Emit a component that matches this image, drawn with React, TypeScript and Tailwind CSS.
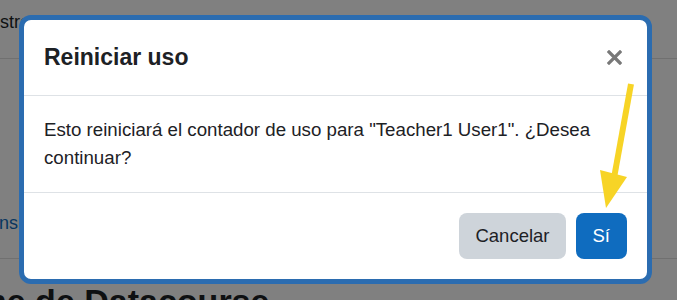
export default function App() {
  return (
    <div className="relative h-[300px] w-[677px] overflow-hidden bg-[#808080] font-['Liberation_Sans',Arial,sans-serif]">
      {/* page behind the backdrop */}
      <div className="flex h-[59px] items-start gap-[23px] border-b border-[#707070] pt-[9px] text-[18px] text-[#0e1012]">
        <span className="-ml-[55px]">Administración del sitio</span>
        <span>Analytics</span>
        <span>Comunidad</span>
      </div>
      <div className="h-[200px] border-b border-[#707070] pt-[151px] text-[18px] text-[#08365f]">
        <span className="-ml-[37px] block">Extensiones</span>
      </div>
      <h2 className="-ml-[99px] mt-[25px] whitespace-nowrap text-[34px] font-bold leading-none text-[#0e1012]">Informe de Datacourse</h2>

      {/* modal */}
      <div className="absolute left-[19px] top-[15px] flex h-[269px] w-[633px] flex-col rounded-[12px] border-[5px] border-[#2b6cb0] bg-white text-[#1d2125]">
        <div className="flex h-[76px] shrink-0 items-center justify-between border-b border-[#dee2e6] px-[20px]">
          <h5 className="text-[23px] font-bold">Reiniciar uso</h5>
          <svg className="mr-[5px]" width="15" height="15" viewBox="0 0 15 15">
            <path d="M2 2 L13 13 M13 2 L2 13" stroke="#787878" strokeWidth="3.2" strokeLinecap="square" />
          </svg>
        </div>
        <div className="h-[97px] shrink-0 border-b border-[#dee2e6] px-[20px] pt-[20px] text-[18.7px] leading-[28px]">
          Esto reiniciará el contador de uso para "Teacher1 User1". ¿Desea continuar?
        </div>
        <div className="flex flex-1 items-center justify-end gap-[10px] px-[20px]">
          <button className="h-[46px] rounded-[8px] bg-[#ced4da] px-[16px] text-[18.5px] text-[#1d2125]">Cancelar</button>
          <button className="h-[46px] rounded-[8px] bg-[#0f6cbf] px-[17px] text-[18.5px] text-white">Sí</button>
        </div>
      </div>

      {/* annotation arrow */}
      <svg className="absolute left-0 top-0" width="677" height="300" viewBox="0 0 677 300">
        <line x1="631" y1="84" x2="614" y2="178" stroke="#f7d426" strokeWidth="6" />
        <polygon points="600,170 627,177 606,208" fill="#f7d426" />
      </svg>
    </div>
  );
}
